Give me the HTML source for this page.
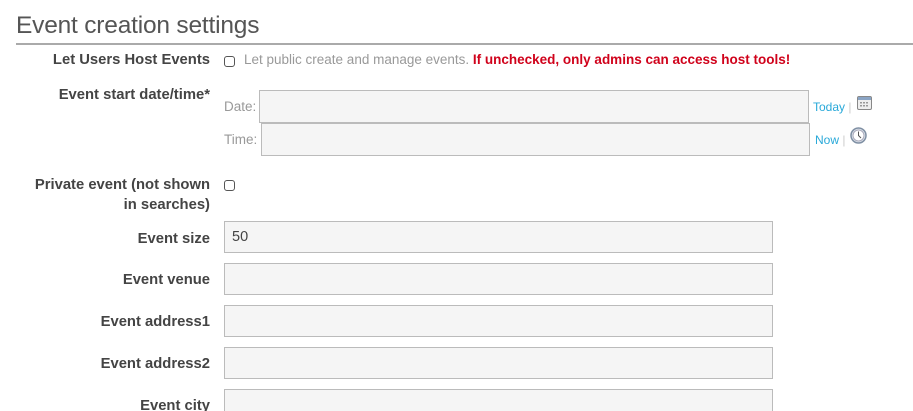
<!DOCTYPE html>
<html><head><style>
html,body{margin:0;width:913px;height:411px;overflow:hidden;background:#fff;font-family:"Liberation Sans",sans-serif;position:relative}
.a{position:absolute;white-space:nowrap}
h1{position:absolute;left:16px;top:12px;margin:0;font-weight:normal;font-size:24.5px;color:#555;letter-spacing:-0.2px}
.hr{position:absolute;left:16px;top:43px;width:897px;height:2px;background:#aaa}
.lbl{position:absolute;right:703px;font-weight:bold;font-size:14.8px;color:#444;text-align:right;line-height:20px}
.in{position:absolute;background:#f5f5f5;border:1px solid #bbb;box-sizing:border-box}
.cb{position:absolute;width:11px;height:11px;border:1px solid #555;border-radius:3px;box-sizing:border-box}
.g{color:#999;font-size:13.5px}
.blue{color:#29a9d9;font-size:12px}
</style></head><body>
<h1>Event creation settings</h1>
<div class="hr"></div>

<div class="lbl" style="top:50px">Let Users Host Events</div>
<div class="cb" style="left:224px;top:56px"></div>
<div class="a g" style="left:244px;top:52px">Let public create and manage events. <b style="color:#d0021b">If unchecked, only admins can access host tools!</b></div>

<div class="lbl" style="top:85px">Event start date/time*</div>
<div class="a g" style="left:224px;top:99px">Date:</div>
<div class="in" style="left:259px;top:90px;width:550px;height:33px"></div>
<div class="a blue" style="left:813px;top:100px">Today <span style="color:#ccc">|</span></div>
<svg class="a" style="left:857px;top:96px" width="15" height="15" viewBox="0 0 15 15"><rect x="0.5" y="0.5" width="14" height="13" rx="1.5" fill="#eee" stroke="#888"/><rect x="1" y="1" width="13" height="3" fill="#8aa4c4"/><g fill="#999"><rect x="3" y="6" width="2" height="1.5"/><rect x="6" y="6" width="2" height="1.5"/><rect x="9" y="6" width="2" height="1.5"/><rect x="3" y="9" width="2" height="1.5"/><rect x="6" y="9" width="2" height="1.5"/><rect x="9" y="9" width="2" height="1.5"/></g></svg>

<div class="a g" style="left:224px;top:132px">Time:</div>
<div class="in" style="left:261px;top:123px;width:549px;height:33px"></div>
<div class="a blue" style="left:815px;top:133px">Now <span style="color:#ccc">|</span></div>
<svg class="a" style="left:850px;top:127px" width="17" height="17" viewBox="0 0 17 17"><circle cx="8.5" cy="8.5" r="7.5" fill="#dde4ec" stroke="#7f8fa3" stroke-width="1.5"/><circle cx="8.5" cy="8.5" r="5.5" fill="#fff" stroke="#aab"/><path d="M8.5 4.5V8.5L11 11" stroke="#555" stroke-width="1" fill="none"/></svg>

<div class="lbl" style="top:175px">Private event (not shown<br>in searches)</div>
<div class="cb" style="left:224px;top:180px"></div>

<div class="lbl" style="top:229px">Event size</div>
<div class="in" style="left:224px;top:221px;width:549px;height:32px"></div>
<div class="a" style="left:232px;top:229px;font-size:14.5px;color:#444">50</div>

<div class="lbl" style="top:270px">Event venue</div>
<div class="in" style="left:224px;top:263px;width:549px;height:32px"></div>

<div class="lbl" style="top:312px">Event address1</div>
<div class="in" style="left:224px;top:305px;width:549px;height:32px"></div>

<div class="lbl" style="top:354px">Event address2</div>
<div class="in" style="left:224px;top:347px;width:549px;height:32px"></div>

<div class="lbl" style="top:396px">Event city</div>
<div class="in" style="left:224px;top:389px;width:549px;height:32px"></div>
</body></html>
